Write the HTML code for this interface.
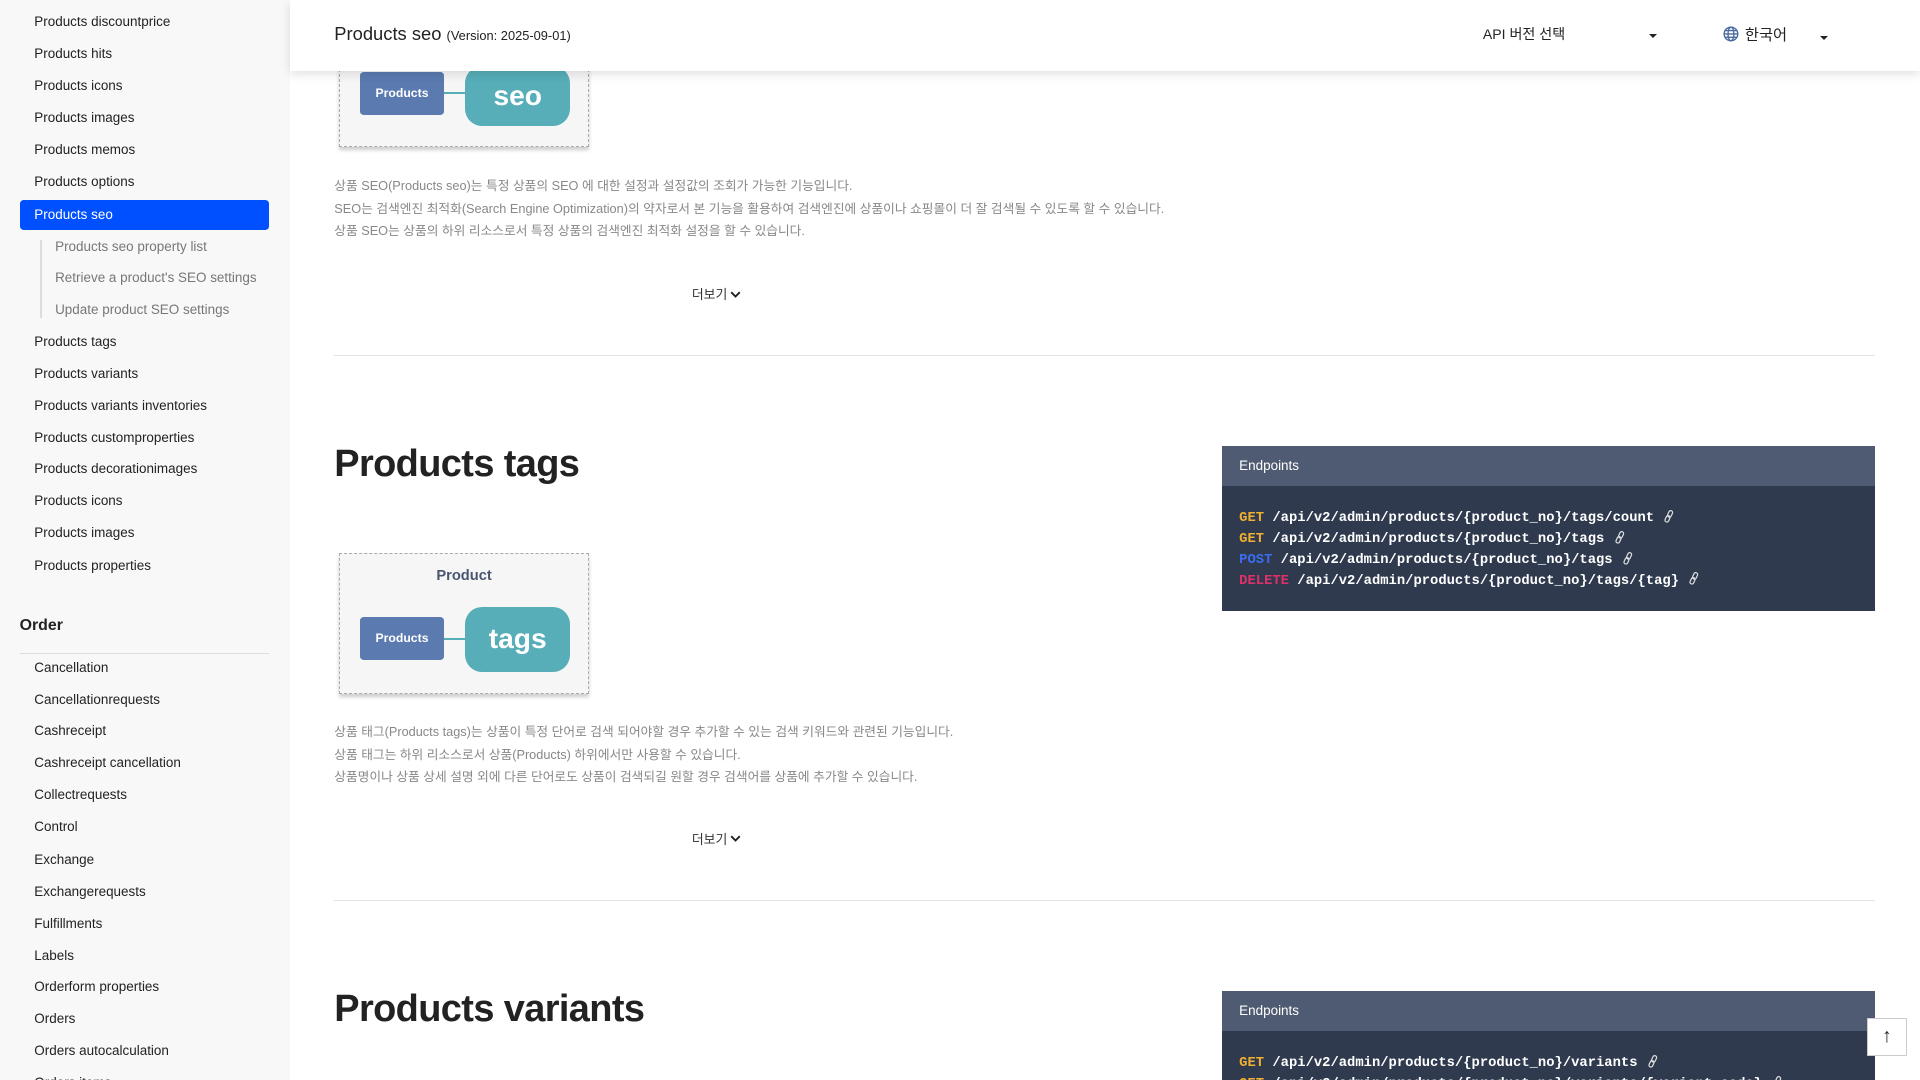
<!DOCTYPE html>
<html><head><meta charset="utf-8">
<style>
*{margin:0;padding:0;box-sizing:border-box}
html,body{width:1920px;height:1080px;overflow:hidden;background:#fff}
#w{width:1568px;height:882px;zoom:1.22449;position:relative;overflow:hidden;font-family:"Liberation Sans","Noto Sans CJK KR",sans-serif;color:#222}
.side{position:absolute;left:0;top:0;width:237px;height:882px;background:#f8f8f8}
.it{position:absolute;left:28px;font-size:11px;color:#222;line-height:14px}
.sub{left:45px;color:#777}
.act{position:absolute;left:16px;top:163px;width:204px;height:25px;background:#0050ff;border-radius:3px}
.hdr{position:absolute;left:237px;top:0;width:1331px;height:58px;background:#fff;box-shadow:0 3px 8px rgba(0,0,0,.12);z-index:5}
.abs{position:absolute}
.diag{position:absolute;left:277px;width:204px;background:#f6f6f6;border:1px dashed #aaa;box-shadow:0 3px 3px rgba(0,0,0,.2)}
.pb{position:absolute;background:#5a7ab0;color:#fff;font-weight:bold;font-size:10px;border-radius:3px;text-align:center}
.rb{position:absolute;background:#57aeb8;color:#fff;font-weight:bold;border-radius:14px;text-align:center}
.ln{position:absolute;height:2px;background:#57aeb8}
.p{position:absolute;left:273px;font-size:10.4px;color:#888;line-height:18.3px}
.more{position:absolute;left:565px;font-size:10.5px;color:#333}
.more svg{vertical-align:1px;margin-left:2px}
.hr{position:absolute;left:273px;width:1258px;height:1px;background:#e3e3e3}
h1{position:absolute;left:273px;font-size:31px;font-weight:bold;color:#222;letter-spacing:-0.5px}
.ep{position:absolute;left:998px;width:533px}
.eph{height:33px;background:#4f5b72;color:#fff;font-size:11px;padding:10px 14px}
.epb{background:#2f3a4f;padding:18px 14px 16px;font-family:"Liberation Mono",monospace;font-weight:bold;font-size:11.3px;color:#fff;line-height:17px}
.g{color:#f0b030}.po{color:#3a6ef0}.d{color:#e0306a}
.lk{display:inline-block;vertical-align:-2px}
</style></head><body><div id="w">
<svg width="0" height="0" style="position:absolute"><defs><symbol id="lk" viewBox="0 0 12 12"><g fill="none" stroke="#ddd" stroke-width="1.1"><rect x="5.5" y="0.8" width="3.4" height="6" rx="1.7" transform="rotate(25 7.2 3.8)"/><rect x="3.2" y="5.2" width="3.4" height="6" rx="1.7" transform="rotate(25 4.9 8.2)"/></g></symbol></defs></svg>
<div class="side">
<div class="act"></div>
<div class="it" style="top:11px">Products discountprice</div>
<div class="it" style="top:37px">Products hits</div>
<div class="it" style="top:63px">Products icons</div>
<div class="it" style="top:89px">Products images</div>
<div class="it" style="top:115px">Products memos</div>
<div class="it" style="top:141px">Products options</div>
<div class="it" style="top:168px;color:#fff">Products seo</div>
<div class="abs" style="left:33px;top:196px;width:1px;height:64px;background:#ddd"></div>
<div class="it sub" style="top:194px">Products seo property list</div>
<div class="it sub" style="top:220px">Retrieve a product's SEO settings</div>
<div class="it sub" style="top:246px">Update product SEO settings</div>
<div class="it" style="top:272px">Products tags</div>
<div class="it" style="top:298px">Products variants</div>
<div class="it" style="top:324px">Products variants inventories</div>
<div class="it" style="top:350px">Products customproperties</div>
<div class="it" style="top:376px">Products decorationimages</div>
<div class="it" style="top:402px">Products icons</div>
<div class="it" style="top:428px">Products images</div>
<div class="it" style="top:455px">Products properties</div>
<div class="abs" style="left:16px;top:504px;font-size:13px;font-weight:bold">Order</div>
<div class="abs" style="left:16px;top:533px;width:204px;height:1px;background:#ddd"></div>
<div class="it" style="top:538px">Cancellation</div>
<div class="it" style="top:564px">Cancellationrequests</div>
<div class="it" style="top:590px">Cashreceipt</div>
<div class="it" style="top:616px">Cashreceipt cancellation</div>
<div class="it" style="top:642px">Collectrequests</div>
<div class="it" style="top:668px">Control</div>
<div class="it" style="top:695px">Exchange</div>
<div class="it" style="top:721px">Exchangerequests</div>
<div class="it" style="top:747px">Fulfillments</div>
<div class="it" style="top:773px">Labels</div>
<div class="it" style="top:799px">Orderform properties</div>
<div class="it" style="top:825px">Orders</div>
<div class="it" style="top:851px">Orders autocalculation</div>
<div class="it" style="top:877px">Orders items</div>
</div>
<div class="hdr">
<div class="abs" style="left:36px;top:19px;font-size:15px">Products seo <span style="font-size:10.5px">(Version: 2025-09-01)</span></div>
<div class="abs" style="left:974px;top:20px;font-size:11.5px">API 버전 선택</div>
<div class="abs" style="left:1110px;top:28px;border:3.5px solid transparent;border-top:4px solid #222"></div>
<svg class="abs" style="left:1170px;top:21px" width="13" height="13" viewBox="0 0 14 14" fill="none" stroke="#4a6aa0" stroke-width="1.2"><circle cx="7" cy="7" r="6"/><ellipse cx="7" cy="7" rx="2.6" ry="6"/><path d="M1 7h12M2 4h10M2 10h10"/></svg>
<div class="abs" style="left:1188px;top:19px;font-size:12.5px">한국어</div>
<div class="abs" style="left:1249px;top:29px;border:3.5px solid transparent;border-top:4px solid #222"></div>
</div>
<div class="diag" style="top:20px;height:100px">
<div class="pb" style="left:16px;top:38px;width:69px;height:35px;line-height:35px">Products</div>
<div class="ln" style="left:85px;top:54px;width:18px"></div>
<div class="rb" style="left:102px;top:33px;width:86px;height:49px;line-height:49px;font-size:23px">seo</div>
</div>
<div class="p" style="top:143px">상품 SEO(Products seo)는 특정 상품의 SEO 에 대한 설정과 설정값의 조회가 가능한 기능입니다.<br>SEO는 검색엔진 최적화(Search Engine Optimization)의 약자로서 본 기능을 활용하여 검색엔진에 상품이나 쇼핑몰이 더 잘 검색될 수 있도록 할 수 있습니다.<br>상품 SEO는 상품의 하위 리소스로서 특정 상품의 검색엔진 최적화 설정을 할 수 있습니다.</div>
<div class="more" style="top:232px">더보기<svg width="9" height="6" viewBox="0 0 9 6"><path d="M1 1l3.5 3.5L8 1" fill="none" stroke="#222" stroke-width="1.6"/></svg></div>
<div class="hr" style="top:290px"></div>
<h1 style="top:362px">Products tags</h1>
<div class="ep" style="top:364px"><div class="eph">Endpoints</div>
<div class="epb"><span class="g">GET</span> /api/v2/admin/products/{product_no}/tags/count <svg class="lk" width="11" height="12"><use href="#lk"/></svg><br><span class="g">GET</span> /api/v2/admin/products/{product_no}/tags <svg class="lk" width="11" height="12"><use href="#lk"/></svg><br><span class="po">POST</span> /api/v2/admin/products/{product_no}/tags <svg class="lk" width="11" height="12"><use href="#lk"/></svg><br><span class="d">DELETE</span> /api/v2/admin/products/{product_no}/tags/{tag} <svg class="lk" width="11" height="12"><use href="#lk"/></svg></div></div>
<div class="diag" style="top:452px;height:115px">
<div class="abs" style="left:0;width:100%;top:11px;text-align:center;font-size:12px;font-weight:bold;color:#4a5670">Product</div>
<div class="pb" style="left:16px;top:51px;width:69px;height:35px;line-height:35px">Products</div>
<div class="ln" style="left:85px;top:68px;width:18px"></div>
<div class="rb" style="left:102px;top:43px;width:86px;height:53px;line-height:53px;font-size:23px">tags</div>
</div>
<div class="p" style="top:589px">상품 태그(Products tags)는 상품이 특정 단어로 검색 되어야할 경우 추가할 수 있는 검색 키워드와 관련된 기능입니다.<br>상품 태그는 하위 리소스로서 상품(Products) 하위에서만 사용할 수 있습니다.<br>상품명이나 상품 상세 설명 외에 다른 단어로도 상품이 검색되길 원할 경우 검색어를 상품에 추가할 수 있습니다.</div>
<div class="more" style="top:677px">더보기<svg width="9" height="6" viewBox="0 0 9 6"><path d="M1 1l3.5 3.5L8 1" fill="none" stroke="#222" stroke-width="1.6"/></svg></div>
<div class="hr" style="top:735px"></div>
<h1 style="top:807px">Products variants</h1>
<div class="ep" style="top:809px"><div class="eph">Endpoints</div>
<div class="epb"><span class="g">GET</span> /api/v2/admin/products/{product_no}/variants <svg class="lk" width="11" height="12"><use href="#lk"/></svg><br><span class="g">GET</span> /api/v2/admin/products/{product_no}/variants/{variant_code} <svg class="lk" width="11" height="12"><use href="#lk"/></svg></div></div>
<div class="abs" style="left:1525px;top:831px;width:32px;height:31px;background:#fff;border:1px solid #ccc;text-align:center;font-size:16px;line-height:29px;font-weight:bold">↑</div>
</div></body></html>
